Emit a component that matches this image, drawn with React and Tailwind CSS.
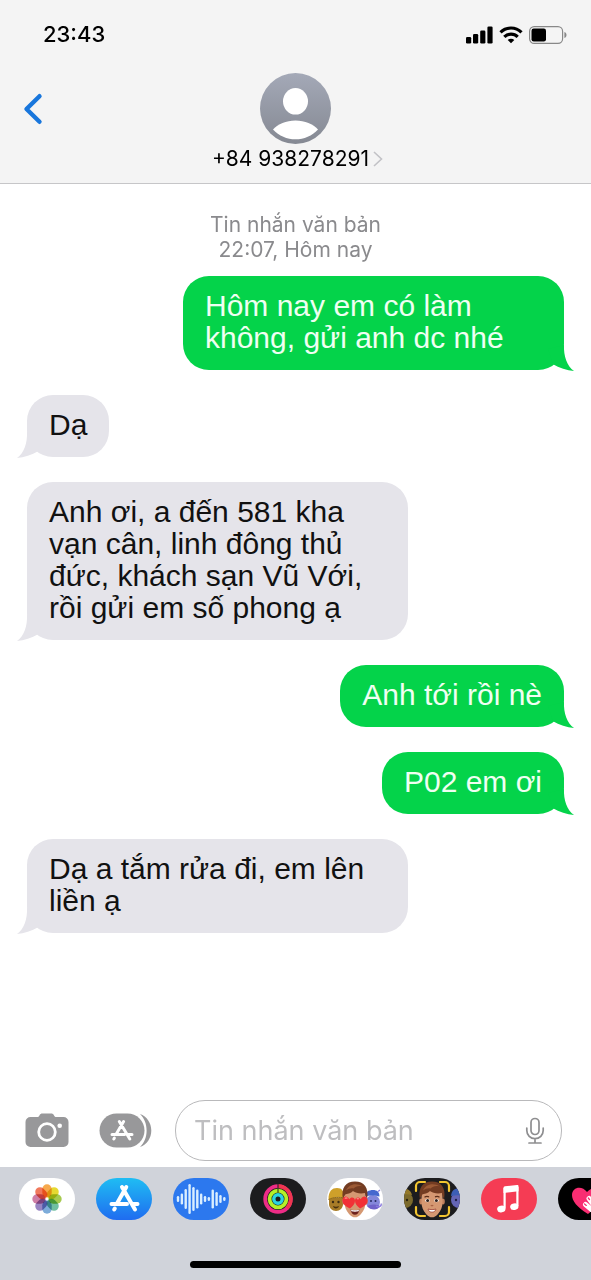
const SENT = "sent";
const RECEIVED = "received";

const messages = [
  { id: 1, from: SENT, text: "Hôm nay em có làm không, gửi anh dc nhé" },
  { id: 2, from: RECEIVED, text: "Dạ" },
  {
    id: 3,
    from: RECEIVED,
    text: "Anh ơi, a đến 581 kha vạn cân, linh đông thủ đức, khách sạn Vũ Với, rồi gửi em số phong ạ",
  },
  { id: 4, from: SENT, text: "Anh tới rồi nè" },
  { id: 5, from: SENT, text: "P02 em ơi" },
  { id: 6, from: RECEIVED, text: "Dạ a tắm rửa đi, em lên liền ạ" },
];

function StatusBar() {
  return (
    <div className="flex h-[68px] items-center justify-between pl-[43px] pr-6">
      <span className="text-[22px] font-medium leading-6 text-black">23:43</span>
      <div className="flex items-center gap-1.5 pt-0.5">
        <svg width="27" height="18" viewBox="0 0 27 18" aria-hidden="true">
          <rect x="0" y="11" width="5.2" height="6.5" rx="1.3" />
          <rect x="7" y="8" width="5.2" height="9.5" rx="1.3" />
          <rect x="14.2" y="4.5" width="5.2" height="13" rx="1.3" />
          <rect x="21.4" y="0.5" width="5.2" height="17" rx="1.3" />
        </svg>
        <svg width="24" height="18" viewBox="0 0 24 18" fill="none" stroke="#000" strokeWidth="3.2" aria-hidden="true">
          <path d="M1.5 6.3a15 15 0 0 1 21 0" />
          <path d="M5.3 10.9a9.6 9.6 0 0 1 13.4 0" />
          <path d="M12 17.2l-3.300-3.200a4.700 4.700 0 0 1 6.600 0z" fill="#000" stroke="none" />
        </svg>
        <svg width="38" height="18" viewBox="0 0 38 18" aria-hidden="true">
          <rect x="0.6" y="0.6" width="33" height="16.8" rx="4.6" fill="none" stroke="#888" strokeWidth="1.2" />
          <rect x="2.5" y="2.6" width="14.5" height="12.8" rx="2.2" />
          <path d="M35.4 6v6c1.5-.5 2.1-1.7 2.1-3s-.6-2.5-2.1-3z" fill="#888" />
        </svg>
      </div>
    </div>
  );
}

function Header() {
  return (
    <header className="border-b border-[#c6c6c8] bg-[#f4f4f4]">
      <StatusBar />
      <div className="grid grid-cols-[1fr_auto_1fr] items-start pt-[5px] pb-[11px]">
        <button type="button" aria-label="Quay lại" className="ml-[22px] mt-5 w-6">
          <svg width="22" height="32" viewBox="0 0 22 32" fill="none" stroke="#1876dc" strokeWidth="4.4" strokeLinecap="round" strokeLinejoin="round">
            <path d="M17.5 3.2 4.5 16l13 12.8" />
          </svg>
        </button>
        <button type="button" className="flex flex-col items-center">
          <svg width="71" height="71" viewBox="0 0 71 71" aria-hidden="true">
            <defs>
              <linearGradient id="avatar" x1="0" y1="0" x2="0" y2="1">
                <stop offset="0" stopColor="#a4a9b7" />
                <stop offset="1" stopColor="#858993" />
              </linearGradient>
            </defs>
            <circle cx="35.5" cy="35.5" r="35.5" fill="url(#avatar)" />
            <ellipse cx="35.5" cy="28.3" rx="12.5" ry="13.3" fill="#fff" />
            <path d="M13 56.5C18 51 26 47.5 35.5 47.5S53 51 58 56.5C52 63 44 66.3 35.5 66.3S19 63 13 56.5z" fill="#fff" />
          </svg>
          <span className="mt-0.5 flex items-center gap-1 pl-1 text-[21px] leading-[26px] text-black">
            +84 938278291
            <svg width="10" height="16" viewBox="0 0 10 16" fill="none" stroke="#c2c2c6" strokeWidth="1.6">
              <path d="M1 1l7.5 7L1 15" />
            </svg>
          </span>
        </button>
      </div>
    </header>
  );
}

function Bubble({ message }) {
  const sent = message.from === SENT;
  return (
    <li
      className={
        sent
          ? "relative max-w-[381px] self-end rounded-[26px] bg-[#04d34a] px-[22px] pt-3.5 pb-4 text-[#effff2]"
          : "relative max-w-[381px] self-start rounded-[26px] bg-[#e5e4ea] px-[22px] pt-3.5 pb-4 text-[#111]"
      }
    >
      {message.text}
      <svg
        width="34"
        height="26"
        viewBox="0 0 34 26"
        aria-hidden="true"
        className={
          sent
            ? "absolute -right-2.5 -bottom-px fill-[#04d34a]"
            : "absolute -bottom-px -left-2.5 -scale-x-100 fill-[#e5e4ea]"
        }
      >
        <path d="M24 0C23.5 11 27 21 34 26 27 25.500 19 23 13 19.300L8 4z" />
      </svg>
    </li>
  );
}

function Composer() {
  return (
    <form className="flex items-center pb-1.5 pl-[25px] pr-[29px]" onSubmit={(e) => e.preventDefault()}>
      <button type="button" aria-label="Máy ảnh">
        <svg width="44" height="35" viewBox="0 0 44 35">
          <path
            d="M5.5 4h6.8c1 0 1.500-.4 2-1.300C15.200.9 16 .5 17.500.5h8.500c1.500 0 2.300.4 3.200 2.200.5.9 1 1.300 2 1.300h7.300a5 5 0 0 1 5 5v20a5 5 0 0 1-5 5h-33a5 5 0 0 1-5-5V9a5 5 0 0 1 5-5z"
            fill="#98989a"
          />
          <circle cx="22" cy="19" r="8.3" fill="none" stroke="#fff" strokeWidth="2.8" />
          <circle cx="34.7" cy="12.8" r="2.3" fill="#fff" />
        </svg>
      </button>
      <button type="button" aria-label="Ứng dụng" className="ml-[30px]">
        <svg width="53" height="35" viewBox="0 0 53 35">
          <path d="M41 1C48 3.5 52.300 10 52.300 17.500S48 31.500 41 34C45.500 29.500 47.600 24 47.600 17.500S45.500 5.500 41 1z" fill="#98989a" />
          <rect x="0.5" y="0.5" width="45" height="34" rx="17" fill="#98989a" />
          <g stroke="#fff" strokeWidth="3" strokeLinecap="round" fill="none">
            <path d="M24.6 8.5 17 21.500M20.300 8.500l10.500 17.500M13 21.500h12.500M28.500 21.500h4.500M15.400 25l-.6 1" />
          </g>
        </svg>
      </button>
      <div className="ml-[23px] flex h-[61px] min-w-0 flex-1 items-center rounded-[30px] border border-[#b9b9bb] bg-white pr-4 pl-[18px]">
        <input
          type="text"
          aria-label="Tin nhắn văn bản"
          placeholder="Tin nhắn văn bản"
          className="min-w-0 flex-1 bg-transparent text-[27px] leading-9 outline-none placeholder:text-[#bebec0]"
        />
        <button type="button" aria-label="Đọc chính tả">
          <svg width="20" height="28" viewBox="0 0 20 28" fill="none" stroke="#8e8e90" strokeWidth="1.7" strokeLinecap="round">
            <rect x="6" y="1.5" width="8" height="16" rx="4" />
            <path d="M1.800 11v2.500a8.200 8.200 0 0 0 16.400 0V11M10 21.700V26M4 26h12" />
          </svg>
        </button>
      </div>
    </form>
  );
}

const petals = ["#f5a03a", "#e3d51c", "#9cc43c", "#5fb896", "#6fa3d6", "#8d78bd", "#c9709c", "#ee6a4a"];

function PhotosIcon() {
  return (
    <svg width="56" height="42" viewBox="0 0 56 42">
      <rect width="56" height="42" rx="21" fill="#fff" />
      {petals.map((color, i) => (
        <rect
          key={color}
          x="23.3"
          y="6.3"
          width="9.4"
          height="13.2"
          rx="4.7"
          fill={color}
          fillOpacity="0.9"
          transform={`rotate(${i * 45} 28 21)`}
          className="mix-blend-multiply"
        />
      ))}
    </svg>
  );
}

function AppStoreIcon() {
  return (
    <svg width="56" height="42" viewBox="0 0 56 42">
      <defs>
        <linearGradient id="store" x1="0" y1="0" x2="0" y2="1">
          <stop offset="0" stopColor="#1fbdf3" />
          <stop offset="1" stopColor="#1f6cf0" />
        </linearGradient>
      </defs>
      <rect width="56" height="42" rx="21" fill="url(#store)" />
      <g stroke="#fff" strokeWidth="4" strokeLinecap="round">
        <path d="M30.300 9 21 25.500M26 9l13 22.500M15.500 26H31M36.500 26h5M18.800 30.500l-.6 1" />
      </g>
    </svg>
  );
}

// half heights of the bars, left to right
const wave = [3, 5.5, 10, 15, 12, 9.5, 5.5, 3, 2, 9.5, 7, 4, 2];

function AudioIcon() {
  return (
    <svg width="56" height="42" viewBox="0 0 56 42">
      <rect width="56" height="42" rx="21" fill="#2c78ee" />
      {wave.map((h, i) => (
        <rect key={i} x={3.8 + i * 3.86} y={21 - h} width="2.4" height={h * 2} rx="1.2" fill="#d9eeff" />
      ))}
    </svg>
  );
}

function FitnessIcon() {
  return (
    <svg width="56" height="42" viewBox="0 0 56 42" fill="none" strokeWidth="3.8">
      <rect width="56" height="42" rx="21" fill="#1c1c1e" />
      <circle cx="28" cy="21" r="12.8" stroke="#ee2c86" />
      <path d="M28 8.200a12.800 12.800 0 0 1 9 21.900" stroke="#f0364f" />
      <circle cx="28" cy="21" r="8.4" stroke="#b4f028" />
      <circle cx="28" cy="21" r="4.2" stroke="#2cd4de" strokeWidth="3.4" />
      <path d="M28 6v4M28 11v3.500" stroke="#1c1c1e" strokeWidth="1" />
    </svg>
  );
}

function BoyFace({ hearts }) {
  return (
    <>
      <ellipse cx="17" cy="23.5" rx="1.8" ry="3" fill="#c07f5c" />
      <ellipse cx="39" cy="23.5" rx="1.8" ry="3" fill="#c07f5c" />
      <path d="M17.500 17c0-6 4-8 10.500-8s10.500 2 10.500 8v7c0 5-1.500 8.500-4.500 12-2 2.500-4 3.300-6 3.300s-4-.8-6-3.300c-3-3.500-4.500-7-4.500-12z" fill="#d59872" />
      <path d="M15.900 21C13.800 9.500 19 3.500 28 3.500S42.200 9.500 40.100 21c-1-1.500-1.800-3.500-2.200-6-4 1-9 .3-12-2-1.500 2.500-6.500 3-7.600 3.500-.8 1.500-1.600 3-2.400 4.500z" fill="#733c22" />
      <path d="M19 12.500C22 6 29 4.500 36 8.500c-5-1-7 0-9.500 2-2-.5-5 0-7.500 2z" fill="#9c5a35" />
      {hearts ? (
        <>
          <path d="M23 30.500c-5.500-2.500-8.500-6-7.300-9.500s5-3 6.500.2c2-3 5.800-2 5.800 1.500 0 3-2.300 5.500-5 7.800z" fill="#f23036" />
          <path d="M33 30.500c5.500-2.500 8.500-6 7.300-9.500s-5-3-6.500.2c-2-3-5.800-2-5.800 1.500 0 3 2.300 5.500 5 7.800z" fill="#f23036" />
          <path d="M17.800 20.500c.8-.8 2-.7 2.600 0M29.800 21c.5-.6 1.500-.6 2 0" stroke="#ff8c88" strokeWidth="1.200" fill="none" />
          <path d="M23.500 31.500c3 1 6 1 9 0-.5 3.500-2.500 5.200-4.500 5.200s-4-1.700-4.500-5.200z" fill="#6d211d" />
          <path d="M24 31.700c2.700.8 5.300.8 8 0l-.4 1.500c-2.400.6-4.800.6-7.200 0z" fill="#fff" />
        </>
      ) : (
        <>
          <ellipse cx="23.5" cy="22.5" rx="2.2" ry="1.8" fill="#fff" />
          <ellipse cx="32.5" cy="22.5" rx="2.2" ry="1.8" fill="#fff" />
          <circle cx="23.6" cy="22.5" r="1.5" fill="#30201b" />
          <circle cx="32.4" cy="22.5" r="1.5" fill="#30201b" />
          <path d="M20.500 19.200c1.500-1 3-1 4.500-.3M31 18.900c1.500-.7 3-.7 4.500.3" stroke="#5b2e1a" strokeWidth="1.3" fill="none" />
          <path d="M26.800 27.200c.8.600 1.600.6 2.400 0" stroke="#a96344" strokeWidth="1.3" fill="none" />
          <path d="M24 31c2.700.8 5.300.8 8 0-.5 2-2 3.200-4 3.200s-3.500-1.200-4-3.200z" fill="#fff" stroke="#a54d3c" strokeWidth="0.9" />
        </>
      )}
    </>
  );
}

function SideFaces() {
  return (
    <>
      <path d="M2 20h14v6c0 4-3 7-7 7s-7-3-7-7z" fill="#a87c27" />
      <path d="M1.500 21.500C1.500 13 5 10 10 10s7 3 7.500 10c-5-1-10-1-16 1.500z" fill="#cfa02a" />
      <path d="M1.500 21.500c5-2.500 11-2.500 16-1.500" stroke="#8f6a1d" strokeWidth="1" fill="none" />
      <circle cx="6" cy="24" r="1.200" fill="#3c2c12" />
      <circle cx="11.500" cy="24" r="1.200" fill="#3c2c12" />
      <path d="M6 28c2 1 4 1 6 0-.5 3-5.500 3.500-6 0z" fill="#4b3310" />
      <circle cx="46" cy="24" r="7" fill="#8487da" />
      <path d="M38 18.500c0-4.500 4-6.500 8-6.500s6.500 2 6.500 6.500c-4-1.500-10-1.500-14.500 0z" fill="#4668cf" />
      <path d="M40 28c4-2 8-2 13 0-2 4.500-9 5-13 0z" fill="#6f63c9" />
      <circle cx="44" cy="23" r="1" fill="#272b62" />
      <circle cx="48.500" cy="23" r="1" fill="#272b62" />
    </>
  );
}

function MemojiStickersIcon() {
  return (
    <svg width="56" height="42" viewBox="0 0 56 42">
      <rect width="56" height="42" rx="21" fill="#fff" />
      <SideFaces />
      <path d="M49 28c3 2 6 0 5-2.500M51 13.500l2-1.500" stroke="#8b79df" strokeWidth="1.3" fill="none" />
      <BoyFace hearts />
    </svg>
  );
}

function MemojiCameraIcon() {
  return (
    <svg width="56" height="42" viewBox="0 0 56 42">
      <defs>
        <clipPath id="pill">
          <rect width="56" height="42" rx="21" />
        </clipPath>
      </defs>
      <g clipPath="url(#pill)">
        <rect width="56" height="42" fill="#1c1c1e" />
        <circle cx="1" cy="22" r="8" fill="#7c6a2c" />
        <path d="M-6 18c2-9 12-9 14-1-4-1-9-1-14 1z" fill="#94792a" />
        <circle cx="3" cy="22" r="1.2" fill="#2c230f" />
        <circle cx="55" cy="22" r="8" fill="#6465b5" />
        <path d="M47 18c1-9 8-9 13-5v6c-4-2-8-2-13-1z" fill="#3c5eb5" />
        <circle cx="52" cy="22" r="1.2" fill="#1f2148" />
        <BoyFace />
        <g fill="none" stroke="#f3c530" strokeWidth="2.2" strokeLinecap="round">
          <path d="M12 13V8a4 4 0 0 1 4-4h5M36 4h5a4 4 0 0 1 4 4v5M45 29v5a4 4 0 0 1-4 4h-5M21 38h-5a4 4 0 0 1-4-4v-5" />
        </g>
      </g>
    </svg>
  );
}

function MusicIcon() {
  return (
    <svg width="56" height="42" viewBox="0 0 56 42">
      <rect width="56" height="42" rx="21" fill="#f53c54" />
      <path d="M22.500 10c0-1 .5-1.500 1.500-1.700l12-1.300c1-.1 1.500.3 1.500 1.300v5L22.500 15z" fill="#fff" />
      <path d="M23.600 10v20.500M36.400 9v19" stroke="#fff" strokeWidth="2.200" />
      <ellipse cx="20.300" cy="31" rx="4.200" ry="3.300" fill="#fff" transform="rotate(-12 20.300 31)" />
      <ellipse cx="33.300" cy="28.700" rx="4.200" ry="3.300" fill="#fff" transform="rotate(-12 33.300 28.700)" />
    </svg>
  );
}

function TouchIcon() {
  return (
    <svg width="56" height="42" viewBox="0 0 56 42">
      <rect width="56" height="42" rx="21" fill="#000" />
      <path d="M30 36C19 29 14 23 14 17c0-8 10-10 15-3 6-7 15-4 15 3 0 6-5 12-14 19z" fill="#f92d72" />
      <g stroke="#fff" strokeWidth="5" strokeLinecap="round">
        <path d="M27.500 26.500l6 5M31 20.500l5 7" />
      </g>
      <path d="M26.500 26l1.800 1.400M30.300 20l1.200 1.600" stroke="#f92d72" strokeWidth="1.3" strokeLinecap="round" />
    </svg>
  );
}

const apps = [
  { name: "Ảnh", Icon: PhotosIcon },
  { name: "App Store", Icon: AppStoreIcon },
  { name: "Âm thanh", Icon: AudioIcon },
  { name: "Thể dục", Icon: FitnessIcon },
  { name: "Nhãn dán Memoji", Icon: MemojiStickersIcon },
  { name: "Memoji", Icon: MemojiCameraIcon },
  { name: "Nhạc", Icon: MusicIcon },
  { name: "Digital Touch", Icon: TouchIcon },
];

function AppDrawer() {
  return (
    <div className="bg-[#d0d3da] pt-[11px] pb-3">
      <div className="flex gap-[21px] overflow-hidden pl-[19px]">
        {apps.map(({ name, Icon }) => (
          <button key={name} type="button" aria-label={name} className="shrink-0">
            <Icon />
          </button>
        ))}
      </div>
      <div className="mx-auto mt-[41px] h-[7px] w-[211px] rounded-full bg-black" />
    </div>
  );
}

export default function App() {
  return (
    <div className="flex min-h-screen flex-col bg-white font-['Inter','Liberation_Sans',sans-serif]">
      <Header />
      <main className="flex-1 px-[27px] pt-7">
        <p className="text-center text-[21px] leading-[25px] text-[#8a8a8d]">
          Tin nhắn văn bản
          <br />
          22:07, Hôm nay
        </p>
        <ul className="mt-3.5 flex flex-col gap-[25px] font-['Liberation_Sans',Arial,sans-serif] text-[30px] leading-8">
          {messages.map((message) => (
            <Bubble key={message.id} message={message} />
          ))}
        </ul>
      </main>
      <Composer />
      <AppDrawer />
    </div>
  );
}
